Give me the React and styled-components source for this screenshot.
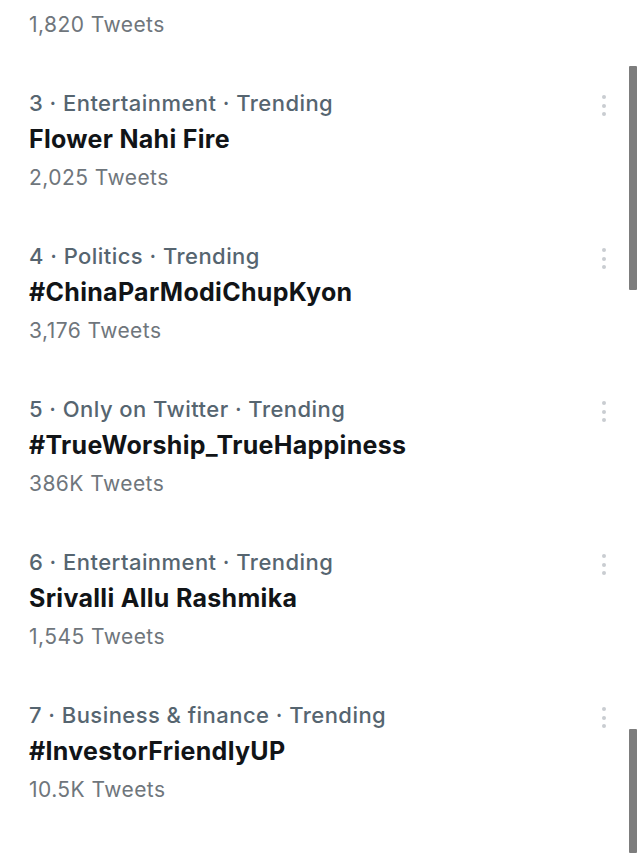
import React from "react";
import styled, { createGlobalStyle } from "styled-components";

const Global = createGlobalStyle`
  html, body {
    margin: 0;
    padding: 0;
    background: #fff;
  }
  body {
    font-family: Inter, "Noto Sans", "Liberation Sans", sans-serif;
    overflow: hidden;
  }
`;

// whole screen
const Screen = styled.div`
  position: relative;
  width: 640px;
  height: 853px;
  overflow: hidden;
  background: #fff;
`;

const List = styled.div`
  display: flex;
  flex-direction: column;
  margin-top: -63px;
`;

const Trend = styled.div`
  display: flex;
  align-items: flex-start;
  height: 153px;
  padding: 0 24px 0 29px;
  box-sizing: border-box;
`;

const Body = styled.div`
  flex: 1;
  display: flex;
  flex-direction: column;
`;

const Meta = styled.div`
  font-size: 22px;
  font-weight: 500;
  line-height: 26px;
  letter-spacing: 0.45px;
  color: #566570;
`;

const Title = styled.div`
  margin-top: 8px;
  font-size: 25px;
  font-weight: 700;
  line-height: 30px;
  letter-spacing: 0.3px;
  color: #111417;
`;

const Count = styled.div`
  margin-top: 11px;
  font-size: 21px;
  font-weight: 400;
  line-height: 26px;
  letter-spacing: 0.45px;
  color: #6f767c;
`;

const More = styled.div`
  display: flex;
  flex-direction: column;
  gap: 4.5px;
  margin-top: 5px;
  padding-right: 10px;
`;

const Dot = styled.span`
  width: 4px;
  height: 4px;
  border-radius: 50%;
  background: #c9cdd1;
`;

const Scroll = styled.div`
  position: absolute;
  right: 3px;
  width: 8px;
  background: #7d7d7d;
  border-radius: 1px;
  top: ${(p) => p.top}px;
  height: ${(p) => p.h}px;
`;

const trends = [
  { meta: "2 · Trending in India", title: "#JayBhimJayJy", count: "1,820 Tweets" },
  { meta: "3 · Entertainment · Trending", title: "Flower Nahi Fire", count: "2,025 Tweets" },
  { meta: "4 · Politics · Trending", title: "#ChinaParModiChupKyon", count: "3,176 Tweets" },
  { meta: "5 · Only on Twitter · Trending", title: "#TrueWorship_TrueHappiness", count: "386K Tweets" },
  { meta: "6 · Entertainment · Trending", title: "Srivalli Allu Rashmika", count: "1,545 Tweets" },
  { meta: "7 · Business & finance · Trending", title: "#InvestorFriendlyUP", count: "10.5K Tweets" },
];

export default function App() {
  return (
    <Screen>
      <Global />
      <List>
        {trends.map((t) => (
          <Trend key={t.meta}>
            <Body>
              <Meta>{t.meta}</Meta>
              <Title>{t.title}</Title>
              <Count>{t.count}</Count>
            </Body>
            <More>
              <Dot />
              <Dot />
              <Dot />
            </More>
          </Trend>
        ))}
      </List>
      <Scroll top={66} h={224} />
      <Scroll top={729} h={124} />
    </Screen>
  );
}
